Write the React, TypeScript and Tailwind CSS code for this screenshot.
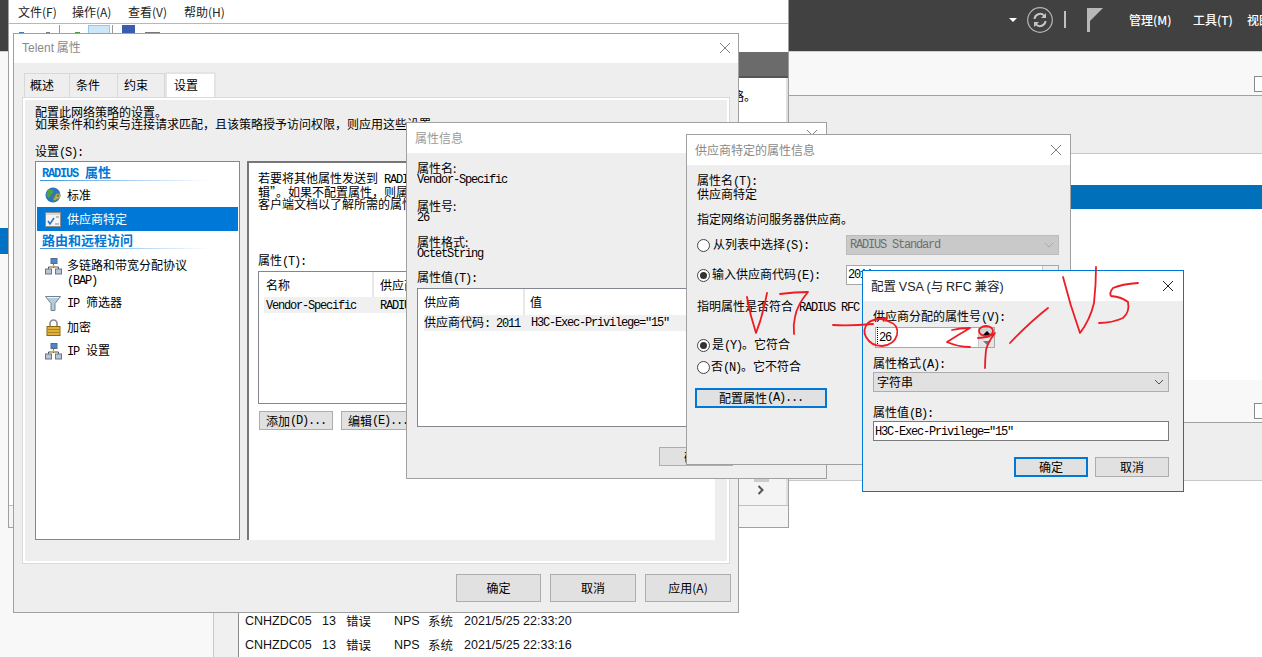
import React from "react";

const monoClass = "font-['Liberation_Mono'] tracking-[-1.2px] text-[12px] whitespace-pre";

// latin text of the old bitmap dialog font, half an em wide per character
const M = ({ children }: { children: React.ReactNode }) => <span className={monoClass}>{children}</span>;

const Close = ({ dark }: { dark?: boolean }) => (
    <svg width="12" height="12" viewBox="0 0 12 12" className={dark ? "text-[#222]" : "text-[#808080]"}>
        <path d="M1 1l10 10M11 1L1 11" stroke="currentColor" strokeWidth="1" fill="none" />
    </svg>
);

const Button = ({ children, className, focused }: { children: React.ReactNode; className: string; focused?: boolean }) => (
    <div
        className={`flex items-center justify-center bg-[#e1e1e1] ${
            focused ? "border-2 border-[#0078d7]" : "border border-[#adadad]"
        } ${className}`}
    >
        {children}
    </div>
);

const Radio = ({ on }: { on?: boolean }) => (
    <span className="flex w-[13px] h-[13px] shrink-0 items-center justify-center rounded-full border border-[#444] bg-white">
        {on && <span className="w-[7px] h-[7px] rounded-full bg-[#333]" />}
    </span>
);

const Chevron = ({ light }: { light?: boolean }) => (
    <svg width="10" height="6" viewBox="0 0 10 6">
        <path d="M1 1l4 4 4-4" stroke={light ? "#a8a8a8" : "#555"} strokeWidth="1" fill="none" />
    </svg>
);

const SectionTitle = ({ children }: { children: React.ReactNode }) => (
    <div className="mx-[4px] h-[19px]">
        <div className="pl-[2px] pt-[2px] h-[17px] text-[13px] leading-[13px] font-bold text-[#0078d7]">{children}</div>
        <div className="h-[1px] w-[170px] bg-gradient-to-r from-[#3a97dd] to-white" />
    </div>
);

const Globe = () => (
    <svg width="17" height="17" viewBox="0 0 17 17" className="shrink-0">
        <circle cx="8" cy="8" r="7.5" fill="#2f74c0" />
        <path d="M3 3c2-1 4-1 5 1s-1 3-2 4-1 3-2 3-3-3-2-5zM9 9c2-1 4-1 5 0s-2 5-4 5-2-3-1-5z" fill="#4fa33f" />
        <circle cx="13" cy="9" r="2" fill="none" stroke="#e0b040" strokeWidth="1.2" />
        <path d="M12 10l-3 3" stroke="#e0b040" strokeWidth="1.4" />
    </svg>
);

const CheckPage = () => (
    <svg width="17" height="17" viewBox="0 0 17 17" className="shrink-0">
        <rect x="0.5" y="1.5" width="15" height="14" fill="#f4f4f4" stroke="#8c8c8c" />
        <rect x="1" y="2" width="14" height="2" fill="#d8d8d8" />
        <path d="M3 10l2 3 4-6" stroke="#2a6fc0" strokeWidth="1.5" fill="none" />
        <path d="M10 13h4M11 6h3" stroke="#888" strokeWidth="1" />
    </svg>
);

const Network = () => (
    <svg width="17" height="17" viewBox="0 0 17 17" className="shrink-0">
        <path d="M8.5 5v5M3.5 12V9h10v3" stroke="#555" strokeWidth="1" fill="none" />
        <rect x="6" y="0.5" width="6" height="5" fill="#4a86d0" stroke="#5a6a80" />
        <rect x="0.5" y="11" width="6" height="5" fill="#b8c4d8" stroke="#6a7486" />
        <rect x="10.5" y="11" width="6" height="5" fill="#b8c4d8" stroke="#6a7486" />
        <path d="M9 7l-2 3" stroke="#e0b040" strokeWidth="1.4" />
    </svg>
);

const Funnel = () => (
    <svg width="17" height="17" viewBox="0 0 17 17" className="shrink-0">
        <path d="M0.5 1.5h15l-5.5 7v7h-4v-7z" fill="#b6cbd8" stroke="#6f8492" />
        <path d="M2 2.5h12" stroke="#eef5f9" strokeWidth="1" />
    </svg>
);

const Lock = () => (
    <svg width="15" height="17" viewBox="0 0 14 17" className="shrink-0 ml-[1px] mr-[1px]">
        <path d="M3.5 8V4.5a3.5 3.5 0 017 0V8" fill="none" stroke="#8a8a8a" strokeWidth="1.6" />
        <rect x="0.5" y="7.5" width="13" height="9" fill="#e2b13c" stroke="#8c6a14" />
        <path d="M1 10.5h12M1 13.5h12" stroke="#b08420" strokeWidth="1" />
    </svg>
);

const SettingRow = ({ icon, children, active }: { icon: React.ReactNode; children: React.ReactNode; active?: boolean }) => (
    <div className={`mx-[1px] flex h-[24px] items-center gap-[5px] pl-[8px] ${active ? "bg-[#0078d7] text-white" : ""}`}>
        {icon}
        <span>{children}</span>
    </div>
);

const ServerManagerPage = () => (
    <div className="absolute inset-0 flex flex-col bg-white">
        <div className="flex h-[52px] shrink-0 items-center bg-[#414141] pb-[12px] border-b border-[#d0d0d0] text-white">
            <div className="flex flex-1 items-center justify-end">
                <div className="mr-[10px] h-0 w-0 border-x-[4px] border-t-[4px] border-x-transparent border-t-white" />
                <svg width="26" height="26" viewBox="0 0 26 26" className="mr-[11px]">
                    <circle cx="13" cy="13" r="12.3" fill="none" stroke="#b5b5b5" strokeWidth="1.2" />
                    <path d="M7.5 12a5.6 5.6 0 019.6-3.4M18.5 14a5.6 5.6 0 01-9.6 3.4" fill="none" stroke="#c4c4c4" strokeWidth="2" />
                    <path d="M19 6v5h-5zM7 20v-5h5z" fill="#c4c4c4" />
                </svg>
                <div className="mr-[21px] h-[17px] w-[2px] bg-[#c0c0c0]" />
                <svg width="16" height="24" viewBox="0 0 16 24" className="mr-[26px]">
                    <rect x="0" y="0" width="3" height="24" fill="#b8b8b8" />
                    <path d="M3 0h13L3 13z" fill="#b8b8b8" />
                </svg>
                <span className="w-[64px] font-medium">管理(M)</span>
                <span className="w-[54px] font-medium">工具(T)</span>
                <span className="w-[15px] overflow-hidden whitespace-nowrap font-medium">视图(V)</span>
            </div>
        </div>
        <div className="flex flex-1">
            <div className="flex w-[214px] shrink-0 flex-col border-r border-[#c8c8c8] bg-[#f8f8f8] pt-[176px]">
                <div className="h-[26px] w-[8px] bg-[#0072c6]" />
            </div>
            <div className="w-[25px] shrink-0 bg-[#f0f0f0] border-r border-[#8a8a8a]" />
            <div className="flex flex-1 flex-col">
                <div className="flex h-[44px] shrink-0 justify-end border-b border-[#a0a0a0] bg-[#f8f8f8] pt-[24px]">
                    <div className="h-[16px] w-[8px] border border-r-0 border-[#8a8a8a] bg-white" />
                </div>
                <div className="h-[58px] shrink-0 border-b border-[#c8c8c8] bg-[#eeeeee]" />
                <div className="h-[31px] shrink-0" />
                <div className="h-[24px] shrink-0 bg-[#0070ba]" />
                <div className="h-[171px] shrink-0" />
                <div className="flex h-[43px] shrink-0 justify-end border-b border-[#a0a0a0] bg-[#f8f8f8] pt-[23px]">
                    <div className="h-[16px] w-[8px] border border-r-0 border-[#8a8a8a] bg-white" />
                </div>
                <div className="h-[58px] shrink-0 border-b border-[#c8c8c8] bg-[#eeeeee]" />
                <div className="flex flex-col pl-[6px] pt-[128px] font-['Liberation_Sans'] text-[12.5px]">
                    {["22:33:20", "22:33:16"].map((time) => (
                        <div key={time} className="flex h-[24px] items-center text-[#111]">
                            <span className="w-[77px]">CNHZDC05</span>
                            <span className="w-[24px]">13</span>
                            <span className="w-[48px] font-['Noto_Sans_CJK_SC']">错误</span>
                            <span className="w-[34px]">NPS</span>
                            <span className="w-[36px] font-['Noto_Sans_CJK_SC']">系统</span>
                            <span>2021/5/25 {time}</span>
                        </div>
                    ))}
                </div>
            </div>
        </div>
    </div>
);

const MmcWindow = () => (
    <div className="absolute left-[8px] top-0 flex h-[528px] w-[781px] flex-col border-x border-b border-[#a0a0a0] bg-white">
        <div className="flex h-[24px] shrink-0 items-center border-b border-[#b8b8b8] pl-[9px] pt-[1px] font-['Noto_Sans_CJK_SC'] text-[#222]">
            <span className="w-[54px]">文件(F)</span>
            <span className="w-[56px]">操作(A)</span>
            <span className="w-[56px]">查看(V)</span>
            <span>帮助(H)</span>
        </div>
        <div className="flex h-[28px] shrink-0 items-start pl-[10px] pt-[1px]">
            <div className="mt-[7px] h-[3px] w-[5px] bg-[#3a7cc0]" />
            <div className="ml-[22px] mt-[7px] h-[3px] w-[4px] bg-[#777]" />
            <div className="ml-[9px] h-[10px] w-[1px] bg-[#999]" />
            <div className="ml-[15px] mt-[7px] h-[3px] w-[5px] bg-[#4a9a40]" />
            <div className="ml-[8px] h-[20px] w-[22px] border border-[#90c8f0] bg-[#cde6f8]" />
            <div className="ml-[2px] h-[10px] w-[1px] bg-[#999]" />
            <div className="ml-[9px] h-[16px] w-[13px] bg-[#3a5cb0]" />
            <div className="ml-[10px] mt-[7px] h-[2px] w-[15px] bg-[#777]" />
        </div>
        <div className="flex flex-1">
            <div className="flex-1" />
            <div className="flex w-[49px] flex-col">
                <div className="h-[24px] bg-[#6b6b6b]" />
                <div className="h-[2px] bg-[#555]" />
                <div className="flex flex-1 flex-col border-r-[2px] border-[#e0e0e0] pt-[12px] font-['Noto_Sans_CJK_SC'] text-black">
                    <span className="-ml-[7px]">略。</span>
                </div>
                <div className="flex h-[27px] flex-col items-end bg-[#f4f4f4] border-r-[2px] border-[#e0e0e0] pr-[21px]">
                    <div className="h-[4px] w-[15px] -mr-[4px] bg-[#cccccc]" />
                    <svg width="8" height="10" viewBox="0 0 8 10" className="mt-[3px]">
                        <path d="M1.5 1l4 4-4 4" stroke="#555" strokeWidth="2" fill="none" />
                    </svg>
                </div>
            </div>
        </div>
        <div className="h-[22px] shrink-0 border-t border-[#c0c0c0] bg-[#f4f4f4]" />
    </div>
);

const TelentWindow = () => (
    <div className="absolute left-[13px] top-[33px] flex h-[580px] w-[726px] flex-col border border-[#a0a0a0] bg-[#eeeeee] text-black">
        <div className="flex h-[29px] shrink-0 items-center justify-between bg-white pb-[2px] pl-[8px] pr-[4px] text-[#8a8a8a]">
            <span>
                <span className="font-['Liberation_Sans']">Telent</span> 属性
            </span>
            <span className="w-[15px]">
                <Close />
            </span>
        </div>
        <div className="flex h-[34px] shrink-0 items-end pl-[10px]">
            <div className="flex h-[24px] w-[46px] items-center border border-b-0 border-[#d8d8d8] pb-[1px] pl-[5px]">概述</div>
            <div className="flex h-[24px] w-[48px] items-center border border-b-0 border-l-0 border-[#d8d8d8] pb-[1px] pl-[6px]">条件</div>
            <div className="flex h-[24px] w-[47px] items-center border border-b-0 border-l-0 border-[#d8d8d8] pb-[1px] pl-[6px]">约束</div>
            <div className="flex h-[25px] w-[51px] items-center border-x-2 border-t-2 border-[#e4e4e4] bg-white pb-[1px] pl-[7px]">设置</div>
        </div>
        <div className="mx-[8px] h-[467px] shrink-0 border border-[#dadada] bg-white p-[2px]">
            <div className="flex h-full flex-col bg-[#eeeeee] pl-[10px] pr-[12px] pt-[6px]">
                <div>配置此网络策略的设置。</div>
                <div>
                    如果条件和约束与连接请求匹配，且该策略授予访问权限，则应用这些设置。
                </div>
                <div className="mt-[15px]">
                    设置<M>(S):</M>
                </div>
                <div className="mt-[2px] flex h-[379px] gap-[7px]">
                    <div className="flex w-[205px] shrink-0 flex-col border border-[#828790] bg-white pt-[1px]">
                        <SectionTitle>
                            <span className="font-['Liberation_Mono'] tracking-[-1.2px] text-[12px]">RADIUS</span>
                            <span className="ml-[7px]">属性</span>
                        </SectionTitle>
                        <div className="h-[1px]" />
                        <SettingRow icon={<Globe />}>标准</SettingRow>
                        <SettingRow icon={<CheckPage />} active>
                            供应商特定
                        </SettingRow>
                        <SectionTitle>路由和远程访问</SectionTitle>
                        <div className="mx-[1px] flex h-[41px] gap-[5px] pl-[8px] pt-[8px]">
                            <Network />
                            <div className="leading-[14px]">
                                多链路和带宽分配协议
                                <br />
                                <M>(BAP)</M>
                            </div>
                        </div>
                        <SettingRow icon={<Funnel />}>
                            <M>IP</M>
                            <span className="ml-[7px]">筛选器</span>
                        </SettingRow>
                        <SettingRow icon={<Lock />}>加密</SettingRow>
                        <SettingRow icon={<Network />}>
                            <M>IP</M>
                            <span className="ml-[7px]">设置</span>
                        </SettingRow>
                    </div>
                    <div className="flex flex-1 flex-col overflow-hidden border-l-2 border-t-2 border-[#777] bg-white pl-[9px] pt-[9px]">
                        <div className="whitespace-nowrap">
                            若要将其他属性发送到<M> RADIUS</M> 客户端，请选择属性，然后单击“编
                        </div>
                        <div className="whitespace-nowrap">辑”。如果不配置属性，则属性不会发送，请参阅</div>
                        <div className="whitespace-nowrap">客户端文档以了解所需的属性。</div>
                        <div className="mt-[44px]">
                            属性<M>(T):</M>
                        </div>
                        <div className="mt-[3px] flex h-[133px] w-[450px] flex-col border border-[#828790] px-[5px]">
                            <div className="flex h-[25px] items-center">
                                <span className="w-[110px] pl-[2px] border-r-2 border-[#e8e8e8] h-full flex items-center">名称</span>
                                <span className="pl-[6px]">供应商</span>
                            </div>
                            <div className="flex h-[16px] items-center bg-[#f0f0f0]">
                                <span className="w-[112px] pl-[2px]">
                                    <M>Vendor-Specific</M>
                                </span>
                                <span className="pl-[4px]">
                                    <M>RADIUS Standard</M>
                                </span>
                            </div>
                        </div>
                        <div className="mt-[7px] flex gap-[8px] pl-[1px]">
                            <Button className="h-[19px] w-[74px]">
                                添加<M>(D)...</M>
                            </Button>
                            <Button className="h-[19px] w-[74px]">
                                编辑<M>(E)...</M>
                            </Button>
                        </div>
                    </div>
                </div>
            </div>
        </div>
        <div className="mt-[10px] flex justify-end gap-[9px] pr-[7px] font-['Noto_Sans_CJK_SC']">
            <Button className="h-[28px] w-[85px]">确定</Button>
            <Button className="h-[28px] w-[86px]">取消</Button>
            <Button className="h-[28px] w-[86px]">应用(A)</Button>
        </div>
    </div>
);

const AttributeInfoWindow = () => (
    <div className="absolute left-[406px] top-[122px] flex h-[357px] w-[421px] flex-col border border-[#a0a0a0] bg-[#eeeeee] text-black">
        <div className="flex h-[30px] shrink-0 items-start justify-end bg-white pr-[8px] pt-[6px]">
            <span className="flex-1 pl-[8px] pt-[3px] text-[#9a9a9a]">属性信息</span>
            <Close />
        </div>
        <div className="flex flex-1 flex-col px-[10px] pt-[9px]">
            <div>属性名:</div>
            <M>Vendor-Specific</M>
            <div className="mt-[14px]">属性号:</div>
            <M>26</M>
            <div className="mt-[12px]">属性格式:</div>
            <M>OctetString</M>
            <div className="mt-[11px]">
                属性值<M>(T):</M>
            </div>
            <div className="mt-[3px] flex h-[139px] w-[399px] flex-col border border-[#828790] bg-white px-[6px]">
                <div className="flex h-[26px] items-center">
                    <span className="flex h-full w-[101px] items-center border-r-2 border-[#e8e8e8]">供应商</span>
                    <span className="pl-[5px]">值</span>
                </div>
                <div className="flex h-[16px] items-center bg-[#f0f0f0] whitespace-nowrap">
                    <span className="w-[107px]">
                        供应商代码<M>: 2011</M>
                    </span>
                    <M>H3C-Exec-Privilege="15"</M>
                </div>
            </div>
            <div className="mt-[20px] flex pl-[242px]">
                <Button className="h-[19px] w-[74px]">确定</Button>
            </div>
        </div>
    </div>
);

const VendorWindow = () => (
    <div className="absolute left-[686px] top-[134px] flex h-[331px] w-[385px] flex-col border border-[#a0a0a0] bg-[#eeeeee] text-black">
        <div className="flex h-[30px] shrink-0 items-center justify-between bg-white pl-[8px] pr-[8px] text-[#8a8a8a]">
            <span>供应商特定的属性信息</span>
            <Close />
        </div>
        <div className="flex flex-1 flex-col pl-[10px] pr-[11px] pt-[9px]">
            <div>
                属性名<M>(T):</M>
            </div>
            <div>供应商特定</div>
            <div className="mt-[13px]">指定网络访问服务器供应商。</div>
            <div className="mt-[10px] flex h-[20px] items-center">
                <Radio />
                <span className="ml-[3px] w-[133px]">
                    从列表中选择<M>(S):</M>
                </span>
                <div className="flex h-[20px] flex-1 items-center justify-between border border-[#bcbcbc] bg-[#c9c9c9] px-[3px] pr-[4px] text-[#6e6e6e]">
                    <span className="font-['Liberation_Mono'] tracking-[-1.2px]">RADIUS Standard</span>
                    <Chevron light />
                </div>
            </div>
            <div className="mt-[10px] flex h-[20px] items-center">
                <Radio on />
                <span className="ml-[2px] w-[134px]">
                    输入供应商代码<M>(E):</M>
                </span>
                <div className="flex h-[20px] flex-1 justify-between border border-[#a8a8a8] bg-white pl-[1px] pt-[3px]">
                    <M>2011</M>
                    <div className="-mt-[3px] h-full w-[16px] border-l border-[#c8c8c8] bg-[#eeeeee]" />
                </div>
            </div>
            <div className="mt-[15px] whitespace-nowrap">
                指明属性是否符合<M> RADIUS RFC</M>
                <span className="ml-[6px]">规范</span>
            </div>
            <div className="mt-[24px] flex h-[14px] items-center gap-[2px]">
                <Radio on />
                <span>
                    是<M>(Y)</M>。它符合
                </span>
            </div>
            <div className="mt-[8px] flex h-[14px] items-center gap-[1px]">
                <Radio />
                <span>
                    否<M>(N)</M>。它不符合
                </span>
            </div>
            <Button focused className="mt-[14px] -ml-[2px] h-[20px] w-[132px]">
                配置属性<M>(A)...</M>
            </Button>
        </div>
    </div>
);

const VsaWindow = () => (
    <div className="absolute left-[862px] top-[270px] flex h-[222px] w-[322px] flex-col border border-[#0078d7] bg-[#eeeeee] text-black">
        <div className="flex h-[30px] shrink-0 items-center justify-between bg-white pl-[8px] pr-[9px] text-[12.5px] text-[#222]">
            <span>
                配置 <span className="font-['Liberation_Sans']">VSA (</span>与 <span className="font-['Liberation_Sans']">RFC</span> 兼容<span className="font-['Liberation_Sans']">)</span>
            </span>
            <Close dark />
        </div>
        <div className="flex flex-1 flex-col px-[10px] pt-[9px]">
            <div>
                供应商分配的属性号<M>(V):</M>
            </div>
            <div className="mt-[3px] ml-[2px] flex h-[21px] w-[120px] border border-[#a8a8a8] bg-white">
                <span className="flex-1 pl-[1px] pt-[2px]">
                    <span className="border-l border-dotted border-black pl-[1px]">
                        <M>26</M>
                    </span>
                </span>
                <div className="flex w-[16px] flex-col border-l border-[#c8c8c8] bg-[#e6e6e6]">
                    <div className="flex flex-1 items-center justify-center border-b border-[#c0c0c0] bg-[#d4d4d4]">
                        <div className="h-0 w-0 border-x-[4px] border-b-[4px] border-x-transparent border-b-black" />
                    </div>
                    <div className="flex flex-1 items-center justify-center">
                        <div className="h-0 w-0 border-x-[4px] border-t-[4px] border-x-transparent border-t-[#777]" />
                    </div>
                </div>
            </div>
            <div className="mt-[9px]">
                属性格式<M>(A):</M>
            </div>
            <div className="mt-[1px] flex h-[20px] w-[296px] items-center justify-between border border-[#adadad] bg-[#e1e1e1] pl-[3px] pr-[4px]">
                <span>字符串</span>
                <Chevron />
            </div>
            <div className="mt-[14px]">
                属性值<M>(B):</M>
            </div>
            <div className="mt-[1px] h-[20px] w-[296px] border border-[#7a7a7a] bg-white pl-[1px] pt-[2px]">
                <M>H3C-Exec-Privilege="15"</M>
            </div>
            <div className="mt-[16px] flex w-[296px] justify-end gap-[7px]">
                <Button focused className="h-[20px] w-[74px]">
                    确定
                </Button>
                <Button className="h-[20px] w-[74px]">取消</Button>
            </div>
        </div>
    </div>
);

const Scribbles = () => (
    <svg width="1262" height="657" viewBox="0 0 1262 657" className="absolute inset-0 pointer-events-none">
        <g fill="none" stroke="#ee1c25" strokeWidth="1.8" strokeLinecap="round" strokeLinejoin="round">
            <path d="M747 297Q750 315 756 333Q763 315 767 293" />
            <path d="M780 294Q795 292 808 292Q797 305 795 317Q793 325 794 334" />
            <path d="M833 325Q850 326 873 324" />
            <path d="M887 318Q872 319 868 323Q862 330 866 337Q871 346 882 346Q894 345 897 335Q899 325 890 322Q882 318 877 319" />
            <path d="M952 330Q960 328 970 328Q958 335 947 342Q958 347 970 347" />
            <ellipse cx="986" cy="331" rx="7" ry="5" />
            <path d="M978 338Q988 338 995 333Q988 342 986 350Q985 360 985 368" />
            <path d="M1048 308Q1030 322 1010 343" />
            <path d="M1063 277Q1070 305 1080 333Q1090 320 1094 303Q1096 285 1096 267" />
            <path d="M1138 283Q1122 284 1113 288Q1109 293 1111 296Q1122 297 1128 302Q1130 312 1123 318Q1112 323 1099 323" />
        </g>
    </svg>
);

const App = () => {
    return (
        <div className="relative h-[657px] w-[1262px] overflow-hidden bg-white font-['Noto_Sans_CJK_SC',sans-serif] text-[12px] leading-[12px]">
            <ServerManagerPage />
            <MmcWindow />
            <TelentWindow />
            <AttributeInfoWindow />
            <VendorWindow />
            <VsaWindow />
            <Scribbles />
        </div>
    );
};

export default App;
